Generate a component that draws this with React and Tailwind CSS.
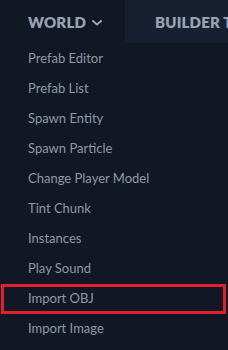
import React from "react";

const items = [
  "Prefab Editor",
  "Prefab List",
  "Spawn Entity",
  "Spawn Particle",
  "Change Player Model",
  "Tint Chunk",
  "Instances",
  "Play Sound",
  "Import OBJ",
  "Import Image",
];

const App = () => {
  return (
    <div
      className="w-[228px] h-[350px] overflow-hidden bg-[#111824]"
      style={{ fontFamily: "Lato, 'Noto Sans', sans-serif" }}
    >
      <nav className="flex h-[43px] items-stretch whitespace-nowrap">
        <div className="flex w-[125px] shrink-0 items-center gap-[6px] pl-[28px] pt-[1px]">
          <span className="text-[15px] font-extrabold tracking-[0.2px] text-[#98a2b3]">WORLD</span>
          <svg width="10" height="6" viewBox="0 0 10 6" className="mt-[1px]">
            <path d="M1 1l4 3.5L9 1" fill="none" stroke="#98a2b3" strokeWidth="2" strokeLinecap="round" strokeLinejoin="round" />
          </svg>
        </div>
        <div className="flex flex-1 items-center bg-[#162030] pl-[30px] pt-[1px]">
          <span className="text-[15px] font-extrabold tracking-[0.2px] text-[#98a2b3]">BUILDER TOOLS</span>
        </div>
      </nav>

      <ul className="flex flex-col pt-[1px]">
        {items.map((label) => (
          <li
            key={label}
            className={
              label === "Import OBJ"
                ? "flex h-[30px] items-center ml-[1px] mr-[2px] border-[3px] border-[#e0202e] pl-[24px] text-[13px] text-[#8e98a7]"
                : "flex h-[30px] items-center pl-[28px] text-[13px] text-[#8e98a7]"
            }
          >
            {label}
          </li>
        ))}
      </ul>
    </div>
  );
};

export default App;
